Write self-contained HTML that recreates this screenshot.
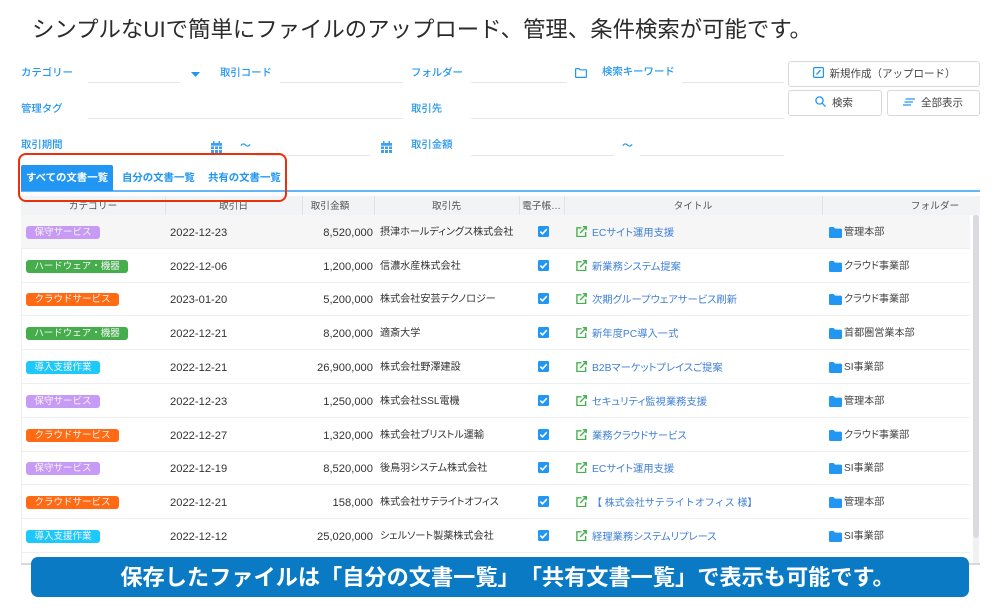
<!DOCTYPE html>
<html lang="ja"><head><meta charset="utf-8"><style>
*{box-sizing:border-box;margin:0;padding:0}
html,body{width:1000px;height:613px;overflow:hidden;background:#fff}
body{position:relative;font-family:"Liberation Sans","Noto Sans CJK JP",sans-serif;color:#333}
.a{position:absolute;white-space:nowrap}
.title{left:32px;top:14px;font-size:22.4px;line-height:32px;color:#2b2b2b}
.l{font-size:10.4px;line-height:14px;color:#2196f3;font-weight:500}
.u{position:absolute;height:1px;background:#e6e6e6}
.btn{position:absolute;border:1px solid #d6d9dc;border-radius:3px;background:#fff;font-size:10.5px;color:#444;text-align:center;white-space:nowrap}
.tab{top:165px;height:26px;font-size:10.4px;line-height:27px;font-weight:700;color:#2196f3}
.hd{position:absolute;left:21px;top:196px;width:959px;height:19px;background:#f2f3f4}
.hc{position:absolute;top:200px;font-size:9.7px;line-height:14px;color:#555;text-align:center;white-space:nowrap}
.hs{position:absolute;top:196px;width:1px;height:19px;background:#e2e3e5}
.r{position:absolute;left:21px;width:949px;height:34px;border-bottom:1px solid #eeeff0;font-size:10.1px;color:#333;font-feature-settings:"palt"}
.r>*{position:absolute;white-space:nowrap}
.c{left:5px;top:10.5px;height:13px;line-height:14px;border-radius:3px;color:#f4f4f4;font-size:9.5px;text-align:center;font-feature-settings:normal}
.p{background:#c79bf5;width:74px}.g{background:#46ad4d;width:102px}.o{background:#ff6a13;width:93px}.b{background:#1dc8fb;width:74px}
.d{left:149px;top:11px;font-size:11.2px;line-height:14px}
.m{right:597px;top:11px;font-size:11.2px;line-height:14px}
.n{left:359px;top:11px;line-height:14px}
.k{left:517px;top:11px;width:11px;height:11px}
.e{left:555px;top:11px;width:11px;height:11px}
.t{left:571px;top:12px;line-height:14px;color:#3f7fd6;font-size:10.3px}
.f{left:808px;top:11.5px;width:13px;height:11px}
.fo{left:823px;top:11px;line-height:14px;color:#444}
</style></head><body>
<svg width="0" height="0" style="position:absolute"><defs>
<g id="ck"><rect width="11" height="11" rx="1.5" fill="#2196f3"/><path d="M2.3 5.6 4.5 7.8 8.8 3.2" fill="none" stroke="#fff" stroke-width="1.6"/></g>
<symbol id="ex" viewBox="0 0 12 12"><g fill="none" stroke="#43b14b" stroke-width="1.5"><path d="M6 2H1v9.5h9.5V6.5"/><path d="M4.5 7.7 10.8 1.2M7.5 .8h3.7v3.7"/></g></symbol>
<path id="fd" d="M0 1.2C0 .5.5 0 1.2 0H4.6L6 1.6H11.8C12.5 1.6 13 2.1 13 2.8V9.8C13 10.5 12.5 11 11.8 11H1.2C.5 11 0 10.5 0 9.8Z" fill="#2196f3"/>
<g id="cal" fill="#3f9ff5"><path d="M2 0h1.5v2.5H2zM7.5 0H9v2.5H7.5zM0 2h11v2.8H0z"/><path d="M0 5.5h3V8H0zM4 5.5h3V8H4zM8 5.5h3V8H8zM0 9h3v3H0zM4 9h3v3H4zM8 9h3v3H8z"/></g>
</defs></svg>

<div class="a title">シンプルなUIで簡単にファイルのアップロード、管理、条件検索が可能です。</div>

<div class="a l" style="left:21px;top:67px">カテゴリー</div>
<div class="u" style="left:88px;top:82px;width:92px"></div>
<svg class="a" style="left:191px;top:72px" width="9" height="5"><path d="M0 0H9L4.5 5Z" fill="#2196f3"/></svg>
<div class="a l" style="left:220px;top:67px">取引コード</div>
<div class="u" style="left:280px;top:82px;width:123px"></div>
<div class="a l" style="left:411px;top:67px">フォルダー</div>
<div class="u" style="left:471px;top:82px;width:96px"></div>
<svg class="a" style="left:575px;top:68px" width="12" height="10" fill="none" stroke="#2196f3" stroke-width="1.2"><path d="M.6 1.2C.6.8.9.6 1.2.6H4L5 1.8H11C11.2 1.8 11.4 2 11.4 2.3V8.8C11.4 9.1 11.2 9.4 10.9 9.4H1.1C.8 9.4.6 9.1.6 8.8Z"/></svg>
<div class="a l" style="left:602px;top:66px">検索キーワード</div>
<div class="u" style="left:682px;top:82px;width:102px"></div>

<div class="a l" style="left:21px;top:103px">管理タグ</div>
<div class="u" style="left:88px;top:118px;width:315px"></div>
<div class="a l" style="left:411px;top:103px">取引先</div>
<div class="u" style="left:471px;top:118px;width:313px"></div>

<div class="a l" style="left:21px;top:139px">取引期間</div>
<svg class="a" style="left:211px;top:141px" width="11" height="12"><use href="#cal"/></svg>
<div class="a l" style="left:240px;top:139px;font-size:11px">～</div>
<div class="u" style="left:255px;top:155px;width:115px"></div>
<svg class="a" style="left:381px;top:141px" width="11" height="12"><use href="#cal"/></svg>
<div class="a l" style="left:411px;top:139px">取引金額</div>
<div class="u" style="left:471px;top:155px;width:143px"></div>
<div class="a l" style="left:622px;top:139px;font-size:11px">～</div>
<div class="u" style="left:640px;top:155px;width:144px"></div>

<div class="btn" style="left:788px;top:61px;width:192px;height:26px;line-height:25px"><svg width="11" height="11" style="vertical-align:-1px;margin-right:6px" fill="none" stroke="#2196f3"><rect x=".6" y=".6" width="9.8" height="9.8" rx="1" stroke-width="1.2"/><path d="M3.5 7.5 7.5 3.2" stroke-width="1.4"/></svg>新規作成（アップロード）</div>
<div class="btn" style="left:788px;top:90px;width:94px;height:26px;line-height:25px;padding-right:2px"><svg width="11" height="11" style="vertical-align:-1px;margin-right:6px" fill="none" stroke="#2196f3" stroke-width="1.3"><circle cx="4.5" cy="4.5" r="3.6"/><path d="M7.2 7.2 10.6 10.6"/></svg>検索</div>
<div class="btn" style="left:887px;top:90px;width:93px;height:26px;line-height:25px;padding-right:1px"><svg width="12" height="8" style="margin-right:6px" fill="none" stroke="#2196f3" stroke-width="1.2"><path d="M2.5 1H12M1.5 4H10M0 7H8"/></svg>全部表示</div>

<div class="a" style="left:21px;top:190px;width:959px;height:2px;background:#64b5f6"></div>
<div class="a tab" style="left:21px;width:92px;background:#2196f3;color:#fff;border-radius:2px 2px 0 0;text-align:center">すべての文書一覧</div>
<div class="a tab" style="left:122px">自分の文書一覧</div>
<div class="a tab" style="left:208px">共有の文書一覧</div>

<div class="hd"></div>
<div class="hc" style="left:21px;width:144px">カテゴリー</div>
<div class="hs" style="left:165px"></div>
<div class="hc" style="left:165px;width:137px">取引日</div>
<div class="hs" style="left:302px"></div>
<div class="hc" style="left:302px;width:56px">取引金額</div>
<div class="hs" style="left:374px"></div>
<div class="hc" style="left:374px;width:145px">取引先</div>
<div class="hs" style="left:519px"></div>
<div class="hc" style="left:519px;width:45px">電子帳…</div>
<div class="hs" style="left:564px"></div>
<div class="hc" style="left:564px;width:258px">タイトル</div>
<div class="hs" style="left:822px"></div>
<div class="hc" style="left:890px;width:90px">フォルダー</div>

<div class="a" style="left:21px;top:215px;width:1px;height:350px;background:#eee"></div>
<div class="a" style="left:973px;top:215px;width:6px;height:348px;background:#f0f1f2"></div>
<div class="a" style="left:973px;top:215px;width:6px;height:323px;background:#d9dbde;border-radius:3px"></div>

<div class="r" style="top:215px;background:#f6f6f6"><span class="c p">保守サービス</span><span class="d">2022-12-23</span><span class="m">8,520,000</span><span class="n">摂津ホールディングス株式会社</span><svg class="k"><use href="#ck"/></svg><svg class="e"><use href="#ex"/></svg><span class="t">ECサイト運用支援</span><svg class="f"><use href="#fd"/></svg><span class="fo">管理本部</span></div>
<div class="r" style="top:249px"><span class="c g">ハードウェア・機器</span><span class="d">2022-12-06</span><span class="m">1,200,000</span><span class="n">信濃水産株式会社</span><svg class="k"><use href="#ck"/></svg><svg class="e"><use href="#ex"/></svg><span class="t">新業務システム提案</span><svg class="f"><use href="#fd"/></svg><span class="fo">クラウド事業部</span></div>
<div class="r" style="top:282px"><span class="c o">クラウドサービス</span><span class="d">2023-01-20</span><span class="m">5,200,000</span><span class="n">株式会社安芸テクノロジー</span><svg class="k"><use href="#ck"/></svg><svg class="e"><use href="#ex"/></svg><span class="t">次期グループウェアサービス刷新</span><svg class="f"><use href="#fd"/></svg><span class="fo">クラウド事業部</span></div>
<div class="r" style="top:316px"><span class="c g">ハードウェア・機器</span><span class="d">2022-12-21</span><span class="m">8,200,000</span><span class="n">適斎大学</span><svg class="k"><use href="#ck"/></svg><svg class="e"><use href="#ex"/></svg><span class="t">新年度PC導入一式</span><svg class="f"><use href="#fd"/></svg><span class="fo">首都圏営業本部</span></div>
<div class="r" style="top:350px"><span class="c b">導入支援作業</span><span class="d">2022-12-21</span><span class="m">26,900,000</span><span class="n">株式会社野澤建設</span><svg class="k"><use href="#ck"/></svg><svg class="e"><use href="#ex"/></svg><span class="t">B2Bマーケットプレイスご提案</span><svg class="f"><use href="#fd"/></svg><span class="fo">SI事業部</span></div>
<div class="r" style="top:384px"><span class="c p">保守サービス</span><span class="d">2022-12-23</span><span class="m">1,250,000</span><span class="n">株式会社SSL電機</span><svg class="k"><use href="#ck"/></svg><svg class="e"><use href="#ex"/></svg><span class="t">セキュリティ監視業務支援</span><svg class="f"><use href="#fd"/></svg><span class="fo">管理本部</span></div>
<div class="r" style="top:418px"><span class="c o">クラウドサービス</span><span class="d">2022-12-27</span><span class="m">1,320,000</span><span class="n">株式会社ブリストル運輸</span><svg class="k"><use href="#ck"/></svg><svg class="e"><use href="#ex"/></svg><span class="t">業務クラウドサービス</span><svg class="f"><use href="#fd"/></svg><span class="fo">クラウド事業部</span></div>
<div class="r" style="top:451px"><span class="c p">保守サービス</span><span class="d">2022-12-19</span><span class="m">8,520,000</span><span class="n">後鳥羽システム株式会社</span><svg class="k"><use href="#ck"/></svg><svg class="e"><use href="#ex"/></svg><span class="t">ECサイト運用支援</span><svg class="f"><use href="#fd"/></svg><span class="fo">SI事業部</span></div>
<div class="r" style="top:485px"><span class="c o">クラウドサービス</span><span class="d">2022-12-21</span><span class="m">158,000</span><span class="n">株式会社サテライトオフィス</span><svg class="k"><use href="#ck"/></svg><svg class="e"><use href="#ex"/></svg><span class="t" style="font-feature-settings:normal;font-size:10px">【 株式会社サテライトオフィス 様】</span><svg class="f"><use href="#fd"/></svg><span class="fo">管理本部</span></div>
<div class="r" style="top:519px"><span class="c b">導入支援作業</span><span class="d">2022-12-12</span><span class="m">25,020,000</span><span class="n">シェルソート製薬株式会社</span><svg class="k"><use href="#ck"/></svg><svg class="e"><use href="#ex"/></svg><span class="t">経理業務システムリプレース</span><svg class="f"><use href="#fd"/></svg><span class="fo">SI事業部</span></div>

<div class="a" style="left:21px;top:563px;width:959px;height:2px;background:#d8d8d8"></div>
<div class="a" style="left:31px;top:557px;width:938px;height:40px;background:#0a7ac4;border-radius:7px;color:#fff;font-size:22.2px;font-weight:700;line-height:42px;text-align:center;padding-left:15px;text-spacing-trim:space-all;font-feature-settings:normal">保存したファイルは「自分の文書一覧」「共有文書一覧」で表示も可能です。</div>
<div class="a" style="left:18px;top:153px;width:269px;height:49px;border:2.5px solid #e8320f;border-radius:8px"></div>
</body></html>
